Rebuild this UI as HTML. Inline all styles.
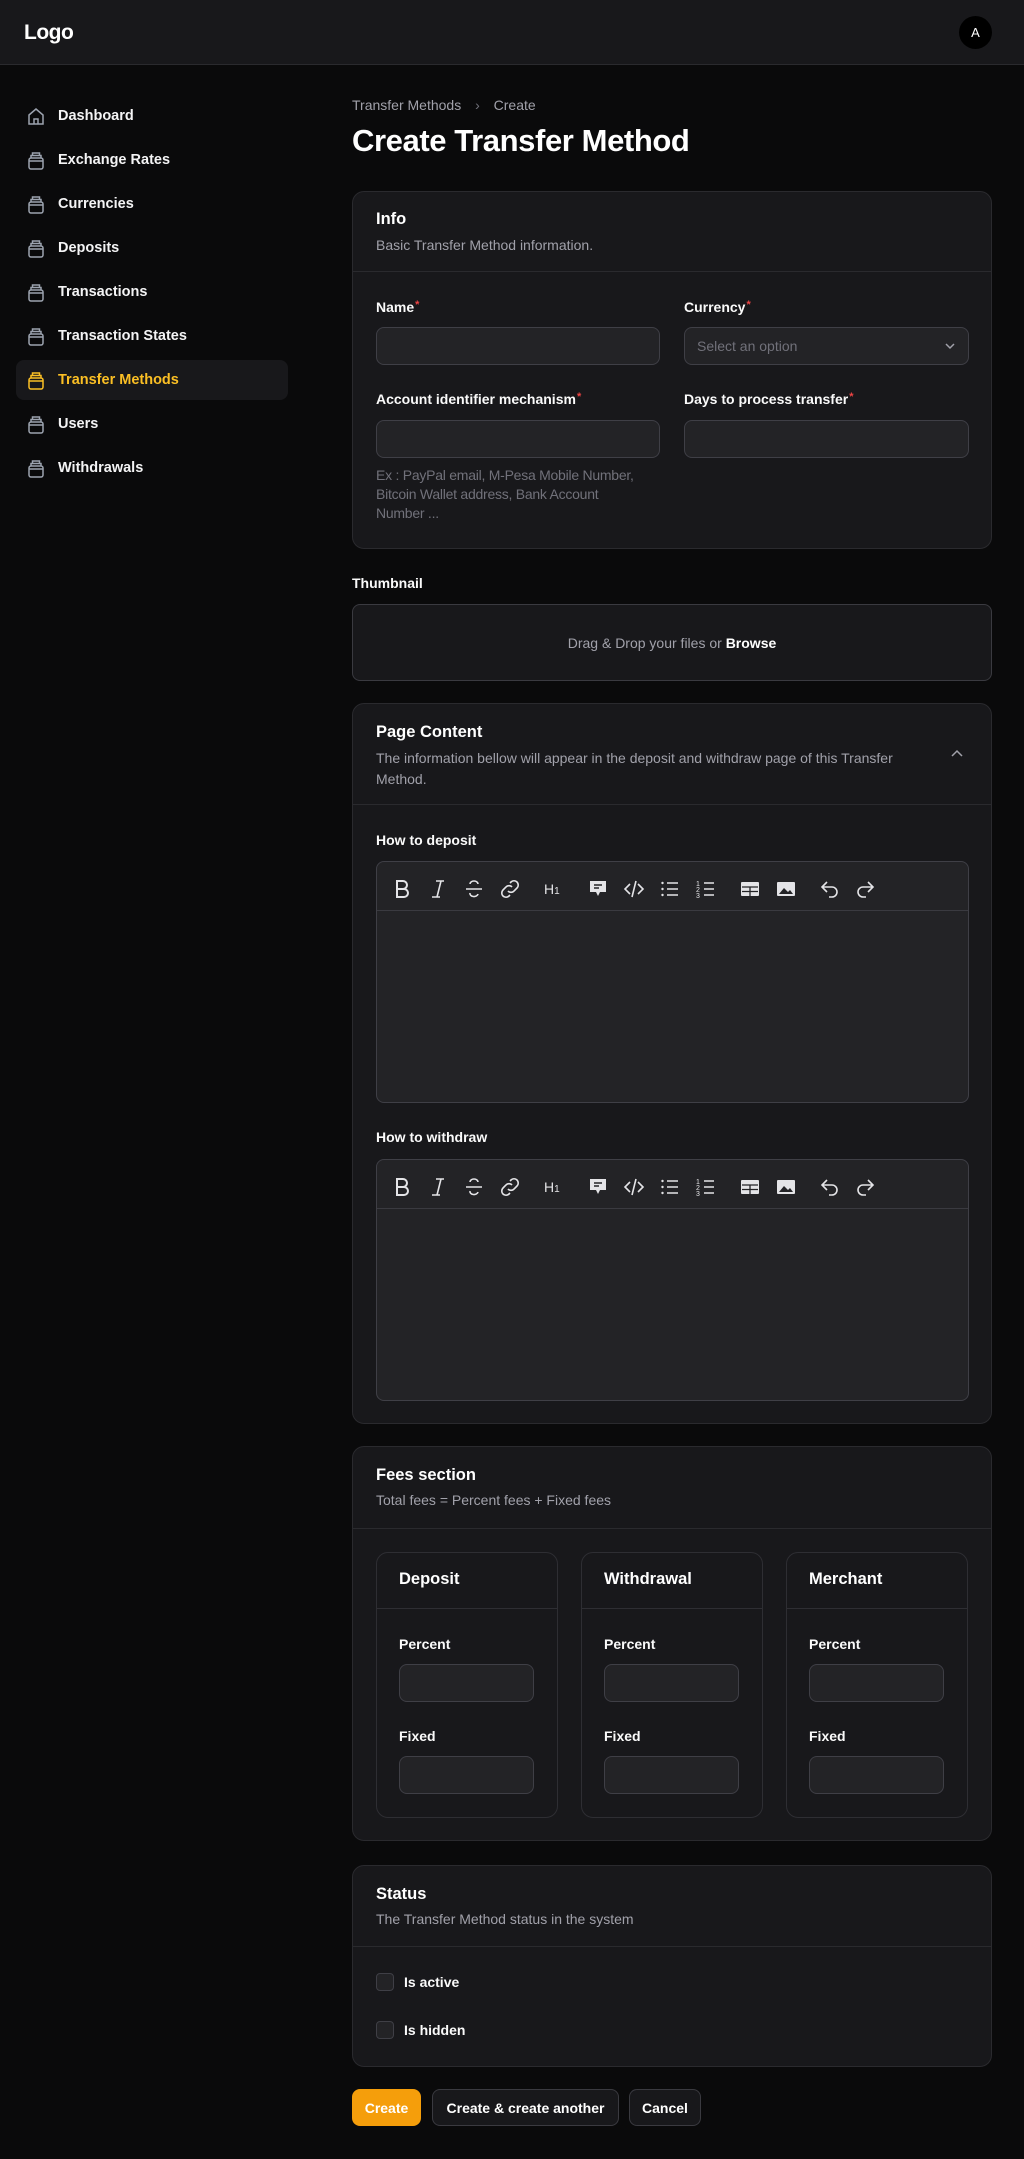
<!DOCTYPE html>
<html><head><meta charset="utf-8">
<style>
*{box-sizing:border-box;margin:0;padding:0}
body{width:1024px;height:2159px;background:#0a0a0b;font-family:"Liberation Sans",sans-serif;color:#fff;position:relative;overflow:hidden;font-size:14px}
.abs{position:absolute}
.hdr{left:0;top:0;width:1024px;height:65px;background:#18181b;border-bottom:1px solid #2a2a2e}
.nav{left:16px;width:272px;height:40px;display:flex;align-items:center;padding-left:10px;font-size:14.5px;font-weight:bold;color:#f4f4f5;border-radius:8px}
.nav svg{margin-right:12px}
.card{left:352px;width:640px;background:#18181b;border:1px solid #2a2a2e;border-radius:12px}
.ct{font-size:16.5px;font-weight:bold}
.cd{font-size:14px;color:#a1a1aa}
.hr{height:1px;background:#2a2a2e}
.lbl{font-size:14px;font-weight:bold;color:#fafafa}
.lbl i{color:#ef4444;font-style:normal;font-size:11px;vertical-align:top;margin-left:1px}
.inp{background:#232326;border:1px solid #3f3f46;border-radius:8px}
.ed{left:376px;width:593px;height:242px;background:#232326;border:1px solid #3f3f46;border-radius:8px}
.tb{position:absolute;top:0;left:0;right:0;height:49px;border-bottom:1px solid #3a3a40}
.ic{position:absolute;top:15px}
.sub{width:182px;height:266px;top:1552px;border:1px solid #2e2e33;border-radius:12px}
.btn{height:37px;border-radius:8px;font-size:14px;font-weight:bold;display:flex;align-items:center;justify-content:center;top:2089px}
.cb{width:18px;height:18px;border:1px solid #3f3f46;background:#232326;border-radius:4px;left:376px}
</style></head><body>
<div class="abs hdr"></div>
<div class="abs" style="left:24px;top:21px;font-size:21px;font-weight:bold;letter-spacing:-0.5px">Logo</div>
<div class="abs" style="left:959px;top:16px;width:33px;height:33px;border-radius:50%;background:#000;font-size:13px;display:flex;align-items:center;justify-content:center">A</div>

<svg width="0" height="0" style="position:absolute"><defs>
<g id="stk" fill="none" stroke="#9ca3af" stroke-width="1.5"><rect x="3" y="8" width="14" height="11" rx="2"/><path d="M5 8V5.5h10V8M6.5 5.5V3h7v2.5M3 11h14"/></g>
<g id="stko" fill="none" stroke="#fbbf24" stroke-width="1.5"><rect x="3" y="8" width="14" height="11" rx="2"/><path d="M5 8V5.5h10V8M6.5 5.5V3h7v2.5M3 11h14"/></g>
</defs></svg>

<div class="abs nav" style="top:96px"><svg width="20" height="20"><path d="M3 9l7-6 7 6v9H3z M8 18v-5h4v5" fill="none" stroke="#9ca3af" stroke-width="1.5"/></svg>Dashboard</div>
<div class="abs nav" style="top:140px"><svg width="20" height="20"><use href="#stk"/></svg>Exchange Rates</div>
<div class="abs nav" style="top:184px"><svg width="20" height="20"><use href="#stk"/></svg>Currencies</div>
<div class="abs nav" style="top:228px"><svg width="20" height="20"><use href="#stk"/></svg>Deposits</div>
<div class="abs nav" style="top:272px"><svg width="20" height="20"><use href="#stk"/></svg>Transactions</div>
<div class="abs nav" style="top:316px"><svg width="20" height="20"><use href="#stk"/></svg>Transaction States</div>
<div class="abs nav" style="top:360px;background:#18181b;color:#fbbf24"><svg width="20" height="20"><use href="#stko"/></svg>Transfer Methods</div>
<div class="abs nav" style="top:404px"><svg width="20" height="20"><use href="#stk"/></svg>Users</div>
<div class="abs nav" style="top:448px"><svg width="20" height="20"><use href="#stk"/></svg>Withdrawals</div>

<div class="abs" style="left:352px;top:97px;font-size:14px;color:#a1a1aa">Transfer Methods <span style="margin:0 10px;color:#71717a">›</span> Create</div>
<div class="abs" style="left:352px;top:123px;font-size:31px;font-weight:bold;letter-spacing:-0.4px">Create Transfer Method</div>

<!-- Info -->
<div class="abs card" style="top:191px;height:358px"></div>
<div class="abs ct" style="left:376px;top:210px">Info</div>
<div class="abs cd" style="left:376px;top:237px">Basic Transfer Method information.</div>
<div class="abs hr" style="left:353px;top:271px;width:638px"></div>
<div class="abs lbl" style="left:376px;top:299px">Name<i>*</i></div>
<div class="abs lbl" style="left:684px;top:299px">Currency<i>*</i></div>
<div class="abs inp" style="left:376px;top:327px;width:284px;height:38px"></div>
<div class="abs inp" style="left:684px;top:327px;width:285px;height:38px;color:#71717a;padding:10px 12px;font-size:14px">Select an option<svg class="abs" style="right:12px;top:14px" width="12" height="8"><path d="M2 2l4 4 4-4" fill="none" stroke="#a1a1aa" stroke-width="1.5"/></svg></div>
<div class="abs lbl" style="left:376px;top:391px">Account identifier mechanism<i>*</i></div>
<div class="abs lbl" style="left:684px;top:391px">Days to process transfer<i>*</i></div>
<div class="abs inp" style="left:376px;top:420px;width:284px;height:38px"></div>
<div class="abs inp" style="left:684px;top:420px;width:285px;height:38px"></div>
<div class="abs" style="left:376px;top:466px;width:284px;font-size:14px;line-height:19px;color:#71717a;letter-spacing:-0.25px">Ex : PayPal email, M-Pesa Mobile Number,<br>Bitcoin Wallet address, Bank Account<br>Number ...</div>

<!-- Thumbnail -->
<div class="abs lbl" style="left:352px;top:575px">Thumbnail</div>
<div class="abs" style="left:352px;top:604px;width:640px;height:77px;background:#18181b;border:1px solid #3a3a40;border-radius:8px;display:flex;align-items:center;justify-content:center;font-size:14px;color:#a1a1aa">Drag &amp; Drop your files or&nbsp;<b style="color:#fff">Browse</b></div>

<!-- Page content -->
<div class="abs card" style="top:703px;height:721px"></div>
<div class="abs ct" style="left:376px;top:723px">Page Content</div>
<div class="abs cd" style="left:376px;top:748px;width:560px;line-height:21px">The information bellow will appear in the deposit and withdraw page of this Transfer Method.</div>
<svg class="abs" style="left:950px;top:749px" width="14" height="10"><path d="M2 7l5-5 5 5" fill="none" stroke="#a1a1aa" stroke-width="1.5"/></svg>
<div class="abs hr" style="left:353px;top:804px;width:638px"></div>

<div class="abs lbl" style="left:376px;top:832px">How to deposit</div>
<div class="abs ed" style="top:861px"><div class="tb" id="tb1"></div></div>
<div class="abs lbl" style="left:376px;top:1129px">How to withdraw</div>
<div class="abs ed" style="top:1159px"><div class="tb" id="tb2"></div></div>

<!-- Fees -->
<div class="abs card" style="top:1446px;height:395px"></div>
<div class="abs ct" style="left:376px;top:1466px">Fees section</div>
<div class="abs cd" style="left:376px;top:1492px">Total fees = Percent fees + Fixed fees</div>
<div class="abs hr" style="left:353px;top:1528px;width:638px"></div>

<div class="abs sub" style="left:376px"></div>
<div class="abs sub" style="left:581px"></div>
<div class="abs sub" style="left:786px"></div>

<!-- Status -->
<div class="abs card" style="top:1865px;height:202px"></div>
<div class="abs ct" style="left:376px;top:1885px">Status</div>
<div class="abs cd" style="left:376px;top:1911px">The Transfer Method status in the system</div>
<div class="abs hr" style="left:353px;top:1946px;width:638px"></div>
<div class="abs cb" style="top:1973px"></div>
<div class="abs lbl" style="left:404px;top:1974px">Is active</div>
<div class="abs cb" style="top:2021px"></div>
<div class="abs lbl" style="left:404px;top:2022px">Is hidden</div>

<div class="abs btn" style="left:352px;width:69px;background:#f59e0b">Create</div>
<div class="abs btn" style="left:432px;width:187px;background:#18181b;border:1px solid #3a3a40">Create &amp; create another</div>
<div class="abs btn" style="left:629px;width:72px;background:#18181b;border:1px solid #3a3a40">Cancel</div>

<script>
var icons=[
[26,'<path d="M6 4h6a4 4 0 010 8H6zM6 12h7a4 4 0 010 8H6z" fill="none" stroke="#e4e4e7" stroke-width="2"/>'],
[62,'<path d="M9 4h8M5 20h8M14 4l-4 16" fill="none" stroke="#e4e4e7" stroke-width="1.6"/>'],
[97,'<path d="M4 12h16M16 7a4 3 0 00-8 0M8 16a4 3 0 008 1" fill="none" stroke="#e4e4e7" stroke-width="1.6"/>'],
[133,'<path d="M10 14a4 4 0 006 0l3-3a4 4 0 00-6-6l-1 1M14 10a4 4 0 00-6 0l-3 3a4 4 0 006 6l1-1" fill="none" stroke="#e4e4e7" stroke-width="1.6"/>'],
[177,'<text x="2" y="17" font-size="14" fill="#e4e4e7" font-family="Liberation Sans">H<tspan font-size="10">1</tspan></text>'],
[221,'<path d="M4 4h16v11h-6l-2 4-2-4H4z" fill="#e4e4e7"/><path d="M8 8h8M8 11h5" stroke="#232326" stroke-width="1.5"/>'],
[257,'<path d="M8 7l-5 5 5 5M16 7l5 5-5 5M14 4l-4 16" fill="none" stroke="#e4e4e7" stroke-width="1.6"/>'],
[293,'<path d="M9 6h11M9 12h11M9 18h11" stroke="#e4e4e7" stroke-width="1.6"/><circle cx="4.5" cy="6" r="1.2" fill="#e4e4e7"/><circle cx="4.5" cy="12" r="1.2" fill="#e4e4e7"/><circle cx="4.5" cy="18" r="1.2" fill="#e4e4e7"/>'],
[329,'<path d="M10 6h10M10 12h10M10 18h10" stroke="#e4e4e7" stroke-width="1.6"/><text x="2" y="9" font-size="7" fill="#e4e4e7">1</text><text x="2" y="15" font-size="7" fill="#e4e4e7">2</text><text x="2" y="21" font-size="7" fill="#e4e4e7">3</text>'],
[373,'<rect x="3" y="5" width="18" height="14" rx="1" fill="#e4e4e7"/><path d="M4 10h16M4 14.5h16M12 10v9" stroke="#232326" stroke-width="1.3"/>'],
[409,'<rect x="3" y="5" width="18" height="14" rx="1" fill="#e4e4e7"/><path d="M5 17l5-6 4 4 2-2 3 4z" fill="#232326"/>'],
[453,'<path d="M9 5L4 10l5 5M4 10h10a5 5 0 010 10h-3" fill="none" stroke="#e4e4e7" stroke-width="1.6"/>'],
[488,'<path d="M15 5l5 5-5 5M20 10H10a5 5 0 000 10h3" fill="none" stroke="#e4e4e7" stroke-width="1.6"/>']];
['tb1','tb2'].forEach(function(id){var el=document.getElementById(id);var h='';icons.forEach(function(a){h+='<svg class="ic" style="left:'+(a[0]-12)+'px" width="24" height="24" viewBox="0 0 24 24">'+a[1]+'</svg>';});el.innerHTML=h;});
var subs=[[376,'Deposit'],[581,'Withdrawal'],[786,'Merchant']];
subs.forEach(function(s){var x=s[0];var h='';
h+='<div class="abs" style="left:'+(x+23)+'px;top:1570px;font-size:16.5px;font-weight:bold">'+s[1]+'</div>';
h+='<div class="abs hr" style="left:'+(x+1)+'px;top:1608px;width:180px;background:#2e2e33"></div>';
h+='<div class="abs lbl" style="left:'+(x+23)+'px;top:1636px">Percent</div>';
h+='<div class="abs inp" style="left:'+(x+23)+'px;top:1664px;width:135px;height:38px"></div>';
h+='<div class="abs lbl" style="left:'+(x+23)+'px;top:1728px">Fixed</div>';
h+='<div class="abs inp" style="left:'+(x+23)+'px;top:1756px;width:135px;height:38px"></div>';
document.body.insertAdjacentHTML('beforeend',h);});
</script>
</body></html>
